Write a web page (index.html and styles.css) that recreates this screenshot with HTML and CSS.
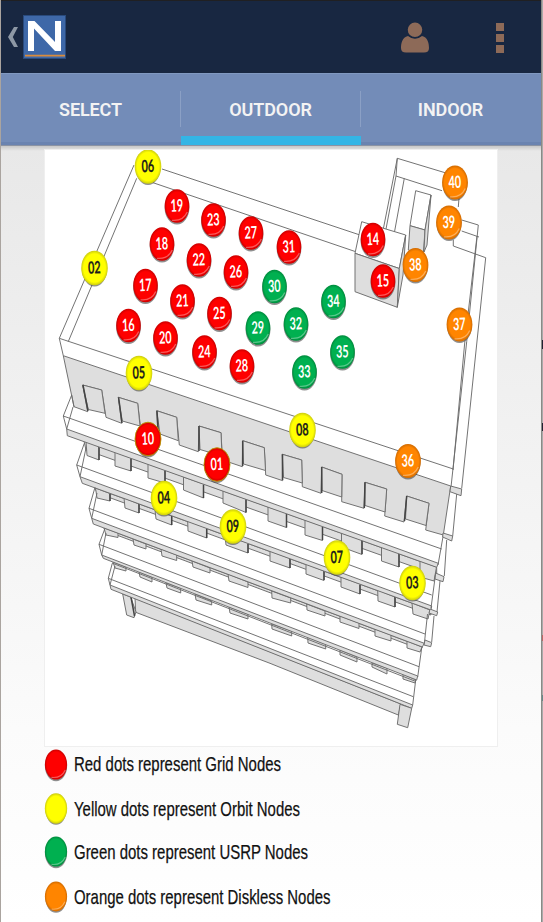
FILE: index.html
```
<!DOCTYPE html>
<html lang="en">
<head>
<meta charset="utf-8">
<title>Outdoor nodes</title>
<link rel="stylesheet" href="styles.css">
</head>
<body>
<div class="app">
  <header class="bar">
    <svg class="back" width="12" height="24" viewBox="0 0 12 24"><path d="M7 2H11L5.800 12 11 22H7L1 12z" fill="#8d98a5"/></svg>
    <svg class="logo" width="43" height="44" viewBox="0 0 43 44">
      <rect x=".5" y=".5" width="42" height="43" fill="#3e68a8" stroke="#294a7c"/>
      <path d="M5 36V6H11.500L32 27V6H38V36H32L11 13.500V36z" fill="#fff"/>
      <path d="M2 40.600H42" stroke="#d98b3c" stroke-width="1.800"/>
    </svg>
    <span class="space"></span>
    <svg class="user" width="28" height="31" viewBox="0 0 28 31" fill="#8d6a58">
      <path d="M7 14Q14 19 21 14C27 15 28 22 28 26Q28 30.500 23 30.500H5Q0 30.500 0 26C0 22 1 15 7 14z"/>
      <circle cx="14" cy="7.800" r="8" stroke="#182741" stroke-width="1.500"/>
    </svg>
    <div class="more"><i></i><i></i><i></i></div>
  </header>
  <nav class="tabs">
    <div class="tab">SELECT</div>
    <div class="tab active">OUTDOOR</div>
    <div class="tab">INDOOR</div>
  </nav>
  <main>
    <svg class="map" width="452" height="596" viewBox="45 150 452 596">
      <defs>
        <radialGradient id="fr"><stop offset=".82" stop-color="#fe0000"/><stop offset="1" stop-color="#c90000"/></radialGradient>
        <radialGradient id="fy"><stop offset=".82" stop-color="#ffff00"/><stop offset="1" stop-color="#cccc10"/></radialGradient>
        <radialGradient id="fg"><stop offset=".82" stop-color="#00b050"/><stop offset="1" stop-color="#008a3c"/></radialGradient>
        <radialGradient id="fo"><stop offset=".82" stop-color="#ff8500"/><stop offset="1" stop-color="#d06a00"/></radialGradient>
        <g id="sh"><ellipse cy="1.500" rx="12.400" ry="17" fill="#444" opacity=".6"/></g>
        <g id="hl"><path d="M-5 14.300Q6 15.500 10.300 6" fill="none" stroke="#fff" stroke-opacity=".35" stroke-width="1.300"/></g>
        <g id="r"><use href="#sh"/><ellipse rx="12.300" ry="16.800" fill="url(#fr)"/><use href="#hl"/></g>
        <g id="g"><use href="#sh"/><ellipse rx="12.300" ry="16.800" fill="url(#fg)"/><use href="#hl"/></g>
        <g id="o"><use href="#sh"/><ellipse rx="12.900" ry="17" fill="url(#fo)"/><use href="#hl"/></g>
        <g id="y"><use href="#sh"/><ellipse rx="13.300" ry="17.200" fill="url(#fy)"/></g>
        <g id="ry"><use href="#sh"/><ellipse rx="13" ry="16.800" fill="url(#fr)" stroke="#b99a00" stroke-width=".9"/></g>
      </defs>

      <!-- roof -->
      <g class="ln">
        <path d="M162 169L360 235M153 182.700L355.700 251.700M134 165L59.300 338.300L453.300 469M136.700 178.300L68.300 341.500M59.300 338.300L63.300 355.700"/>
        <path d="M397.300 158.300L447 173.300M396 176L442 190.700M397.300 158.300L383.300 229M397.300 158.300L396 176L386 229M404.300 178.300L394.300 233"/>
        <path d="M459 198L458.300 207M461.700 220L478.300 225L466.700 341.700L451 487M477 236L464.500 345L453 470M461.700 231L479 237M453.300 240V246L485.700 257.700L461.700 488.500"/>
        <path class="w" d="M415.700 190.700L431 195L425 230L410 225.700z"/>
        <path class="f" d="M410 225.700L425 230L423.300 254L408.300 250z"/>
        <path class="f" d="M431 195L425 230L424 252L427 245z"/>
        <path class="w" d="M361.700 221.700L405.700 235L399.300 268.500L355 253.300z"/>
        <path class="f" d="M355 253.300L399.300 268.500L397.300 307.300L355 291.700z"/>
        <path class="f" d="M405.700 235L399.300 268.500L397.300 307.300L403 275z"/>
      </g>

      <!-- top storey with doorways -->
      <g class="ln">
        <path class="f" d="M63.300 355.700L450.700 486L443.300 535L425.700 530L429 503.300L406.700 496L404 522L384.700 516L386.700 489L365 482.300L364 508.300L341.700 501.700L342 474.300L321.700 467L321 493.300L302.300 486.700L301.700 460L282.300 454.300L282.700 480.700L265.700 475L264.300 447.700L242.700 440.700L242.300 466.700L222.500 460L221 432.700L199 426L198.300 451.700L179.300 445L176.700 417.300L156.700 410.700L158 437L141 431L137.700 403.300L118.300 397.300L121.700 423.300L106 417.300L101.700 390L82.700 385L87.700 411.700L74 406.700z"/>
        <path class="f" d="M82.700 385L101.700 390L105 413.300L88.300 409.500zM118.300 397.300L137.700 403.300L140 426L122.300 421zM156.700 410.700L176.700 417.300L178.300 440.700L160 434zM199 426L221 432.700L222 456L200 449.500zM242.700 440.700L264.300 447.700L265.500 470.500L243.500 464zM282.300 454.300L301.700 460L302.300 483L283.500 477.500zM321.700 467L342 474.300L341.700 497L322 490.500zM365 482.300L386.700 489L385 512L365 505.500zM406.700 496L429 503.300L426 525.500L405.500 519z"/>
        <path class="b" d="M83 385L88 411M118.600 397.300L122 423M157 411L158.500 436M199 426V451M242.700 441V466M282.500 454.300V480M321.700 467V493M365 482.300L364.300 508M406.700 496L404.500 521"/>
      </g>

      <!-- brackets under each ledge -->
      <g class="ln">
        <path class="f" d="M84 441L436.700 567.300V575L86 450z"/>
        <path class="f" d="M86 441L99 446V460L87 455.500zM115 452L131 458V471L115 466zM148 464L165 470V483L148 478zM183.500 477L203.500 484V498L183.500 490zM223 491L246 499V512.500L223 503zM268 507L286.500 513V527.500L268 521zM305 520L322.500 526V540.500L305 535zM341.500 533L362 540V554.500L341.500 547zM381.500 547L399 553V567L381.500 561zM420 561L436.500 567L434 581L420 577z"/>
        <path class="b" d="M99 446V460M131 458V471M165 470V482M203.500 485V498M246 499V512.500M286.500 514V527.500M322.500 527V540M362 541V554M399 554V567"/>
        <path class="f" d="M95 488L431 610V615L97 493z"/>
        <path class="f" d="M95.500 488L110 493.500V501L97 498zM124 498L139 504V513L125 508zM155 510L171.700 516V525L156 519zM187.700 521L206.700 528V538L188 531zM225 535L248 543V553L226 545zM270 551L290 558.500V568L270 561zM306 564L324 571V580.500L306 574zM341 577L360 584V594L341 587zM377.700 590L395 597V607L378 601zM412 603L430 610L428 619L413 614z"/>
        <path class="b" d="M110 494V501M139 504V513M171.700 516V525M206.700 529V538M248 544V553M290 559V568M324 571V580M360 585V594M395 597V607"/>
        <path class="f" d="M104 528L422.300 647L421 649.500L106 531z"/>
        <path class="f" d="M104 528L118 533V537.500L106 535zM133 539L146 544V549L134 545zM161 549L176.700 555V560.500L162 556zM192 561L210 568V573L193 567zM228 574L248 582V587.500L229 581zM271.700 591L290.700 598V603L272 598zM306.700 604L325 611V616L307 610zM340 616L359 623V628.500L340 622zM375 629L391 635V641L375 636zM407 641L422 647L420 652L407 648z"/>
        <path class="f" d="M113 562L126 567V571L115 568zM139 572L152 577V582L140 577zM166 583L180.700 588V593L167 588zM195 594L211.700 601V605L196 600zM229 607L248 614V619L230 613zM271.700 624L291.700 631V636L272 629zM307.700 637L325.700 644V649L308 643zM340 650L357 657V662L340 655zM372 663L387 668V674L372 667zM403 674L416 680L415 683L403 679z"/>
        <path d="M112 563L416 681.500"/>
      </g>

      <!-- ledges -->
      <g class="ln">
        <path d="M74 407L71.700 395L63.300 416L66.700 429M73 407L66.700 429M63.300 416L441.700 549"/>
        <path class="f" d="M66.700 429L438.300 563.300L436.700 567.300L67.300 435.700z"/>
        <path d="M84.300 443.300L76.700 465L80 476.700M86 448L80 476.700M76.700 465L431.700 595"/>
        <path class="f" d="M80 476.700L431.700 606L431 610L82.300 483.300z"/>
        <path d="M95 487.300L89 508.300L91.700 518.300M97 493L91.700 518.300M89 508.300L425 634"/>
        <path class="f" d="M91.700 518.300L424.300 643.300L422.300 647L93.300 524z"/>
        <path d="M105 528.300L99 544.300L101.700 555M106 533L101.700 555M99 544.300L419 666.700"/>
        <path class="f" d="M101.700 555L417.700 676L416.700 680L103.300 558.300z"/>
        <path d="M112.300 563.300L108.300 578.300L110 585M115 566L110 585M108.300 578.300L413.300 696.700"/>
        <path class="f" d="M135 598L401 704L398.300 715L270 663.300L135.700 612.300z"/>
        <path class="f" d="M122.700 594L130.700 597L136 612L134 617.700L126.700 615z"/>
        <path class="b" d="M131 597L134.500 616"/>
        <path class="f" d="M110 585L412.700 705L411.700 708.300L111 589.300z"/>
        <path class="f" d="M400 704.300L411.700 708.300L407.700 727.700L397.300 724.300z"/>
      </g>

      <!-- right-hand beams -->
      <g class="ln">
        <path d="M443.300 535L438 565M456.700 494L452.700 536M446.700 540L444.300 576M435.700 573L431 608M440 581L437 612M427.500 614L424.300 644M434 616L431.700 642M421.700 648L417.700 677M415.700 680L412.700 705"/>
        <path class="f" d="M450.700 486L461.700 489L461 495.700L450 491.700zM443 533L452.700 536L451.700 541L442.700 537zM435.700 573L444 576.700L443 581.700L435 579zM430 609L437.700 612L436.700 615.700L429 613zM425 640L431.700 642.700L430.700 646.700L424 645z"/>
      </g>

      <!-- nodes -->
      <g class="dark">
        <g transform="translate(148 166.500)"><use href="#y"/><text>06</text></g>
        <g transform="translate(94.500 268)"><use href="#y"/><text>02</text></g>
        <g transform="translate(139 373)"><use href="#y"/><text>05</text></g>
        <g transform="translate(302.500 430)"><use href="#y"/><text>08</text></g>
        <g transform="translate(164 498)"><use href="#y"/><text>04</text></g>
        <g transform="translate(233 526.500)"><use href="#y"/><text>09</text></g>
        <g transform="translate(337 557.500)"><use href="#y"/><text>07</text></g>
        <g transform="translate(412.500 583)"><use href="#y"/><text>03</text></g>
      </g>
      <g class="light">
        <g transform="translate(177 206)"><use href="#r"/><text>19</text></g>
        <g transform="translate(213.500 220)"><use href="#r"/><text>23</text></g>
        <g transform="translate(251 233)"><use href="#r"/><text>27</text></g>
        <g transform="translate(289 247)"><use href="#r"/><text>31</text></g>
        <g transform="translate(162 244)"><use href="#r"/><text>18</text></g>
        <g transform="translate(199 260)"><use href="#r"/><text>22</text></g>
        <g transform="translate(236 272)"><use href="#r"/><text>26</text></g>
        <g transform="translate(145.500 285.500)"><use href="#r"/><text>17</text></g>
        <g transform="translate(182.500 301)"><use href="#r"/><text>21</text></g>
        <g transform="translate(219.500 313.500)"><use href="#r"/><text>25</text></g>
        <g transform="translate(128.500 325.500)"><use href="#r"/><text>16</text></g>
        <g transform="translate(165.500 338)"><use href="#r"/><text>20</text></g>
        <g transform="translate(204.500 352)"><use href="#r"/><text>24</text></g>
        <g transform="translate(242 366)"><use href="#r"/><text>28</text></g>
        <g transform="translate(373 239.500)"><use href="#r"/><text>14</text></g>
        <g transform="translate(383 281)"><use href="#r"/><text>15</text></g>
        <g transform="translate(148 439)"><use href="#ry"/><text>10</text></g>
        <g transform="translate(217 464.500)"><use href="#ry"/><text>01</text></g>
        <g transform="translate(274.500 286.500)"><use href="#g"/><text>30</text></g>
        <g transform="translate(333.500 301.500)"><use href="#g"/><text>34</text></g>
        <g transform="translate(258 328)"><use href="#g"/><text>29</text></g>
        <g transform="translate(296 324)"><use href="#g"/><text>32</text></g>
        <g transform="translate(304.500 372)"><use href="#g"/><text>33</text></g>
        <g transform="translate(342.500 352)"><use href="#g"/><text>35</text></g>
        <g transform="translate(455 182.500)"><use href="#o"/><text>40</text></g>
        <g transform="translate(449 222.500)"><use href="#o"/><text>39</text></g>
        <g transform="translate(415.500 265)"><use href="#o"/><text>38</text></g>
        <g transform="translate(459.500 324.500)"><use href="#o"/><text>37</text></g>
        <g transform="translate(408 461)"><use href="#o"/><text>36</text></g>
      </g>
    </svg>
    <ul class="legend">
      <li><svg width="440" height="36"><use href="#r" transform="translate(11 17.500) scale(.9)"/><text x="29" y="23.500" textLength="207" lengthAdjust="spacingAndGlyphs">Red dots represent Grid Nodes</text></svg></li>
      <li><svg width="440" height="36"><use href="#y" transform="translate(11 17.500) scale(.84 .88)"/><text x="29" y="24.500" textLength="226" lengthAdjust="spacingAndGlyphs">Yellow dots represent Orbit Nodes</text></svg></li>
      <li><svg width="440" height="36"><use href="#g" transform="translate(11 16.500) scale(.9)"/><text x="29" y="23.500" textLength="234" lengthAdjust="spacingAndGlyphs">Green dots represent USRP Nodes</text></svg></li>
      <li><svg width="440" height="36"><use href="#o" transform="translate(11 17.500) scale(.86 .88)"/><text x="29" y="24.500" textLength="256.500" lengthAdjust="spacingAndGlyphs">Orange dots represent Diskless Nodes</text></svg></li>
    </ul>
  </main>
</div>
</body>
</html>
```
FILE: styles.css
```
* { box-sizing: border-box; }
body {
  margin: 0;
  height: 922px;
  overflow: hidden;
  background: linear-gradient(#aaa 340px, #223 340px 349px, #aaa 349px 423px, #223 423px 431px, #aaa 431px 635px, #b66 635px 641px, #aaa 641px 695px, #688 695px 701px, #aaa 701px);
}
.app {
  height: 922px;
  border-left: 1px solid #aaa49f;
  margin-right: 2px;
  box-shadow: 1px 0 #8a8a86;
  display: flex;
  flex-direction: column;
  overflow: hidden;
}
.bar {
  height: 73px;
  flex: none;
  background: #182741;
  border-top: 1px solid #202022;
  display: flex;
  align-items: flex-start;
}
.back { margin: 24px 0 0 6px; }
.logo { margin: 14px 0 0 4px; }
.space { flex: 1; }
.user { margin: 21px 67px 0 0; }
.more { margin: 22px 37px 0 0; display: grid; gap: 3px; }
.more i { display: block; width: 8px; height: 8px; background: #8d6a58; }
.tabs {
  height: 73px;
  flex: none;
  background: #738cb8;
  border-top: 1px solid #8199c0;
  border-bottom: 1px solid #8b93a3;
  box-shadow: inset 0 -3px #6a83b0;
  display: flex;
}
.tab {
  width: 180px;
  flex: none;
  display: flex;
  align-items: center;
  justify-content: center;
  padding: 0 1px 1px 0;
  color: #f3f3f3;
  font: 600 18px Roboto, sans-serif;
  letter-spacing: -.1px;
  position: relative;
}
.tab + .tab::before {
  content: "";
  position: absolute;
  left: -1px;
  top: 17px;
  height: 36px;
  width: 1px;
  background: #8ba0c5;
}
.tab.active { box-shadow: inset 0 -9px #33b5e5; }
main {
  flex: 1;
  padding: 4px 0 0 44px;
  background: linear-gradient(rgba(0,0,0,.14), rgba(0,0,0,0) 5px), linear-gradient(#e8e8e8, #fbfbfb 75%, #fff);
}
.map { display: block; background: #fff; box-shadow: 0 0 0 1px #efefef; }
.ln { fill: none; stroke: #6c6c6c; stroke-width: .95; stroke-linejoin: round; }
.ln .f { fill: #dedede; }
.ln .w { fill: #fff; }
.ln .b { stroke: #444; stroke-width: 1.5; }
.map text {
  font: 700 17px Lato, sans-serif;
  text-anchor: middle;
  transform: translateY(5.5px) rotate(-2deg) scaleX(.64);
}
.light text { fill: #fff; }
.dark text { fill: #1c1c1c; stroke: #1c1c1c; stroke-width: .2; }
.legend { list-style: none; margin: 0; padding: 1px 0 0; }
.legend li { height: 44px; }
.legend svg { display: block; overflow: visible; }
.legend text { font: 21px "Liberation Sans", sans-serif; fill: #111; stroke: #111; stroke-width: .25; }
```
